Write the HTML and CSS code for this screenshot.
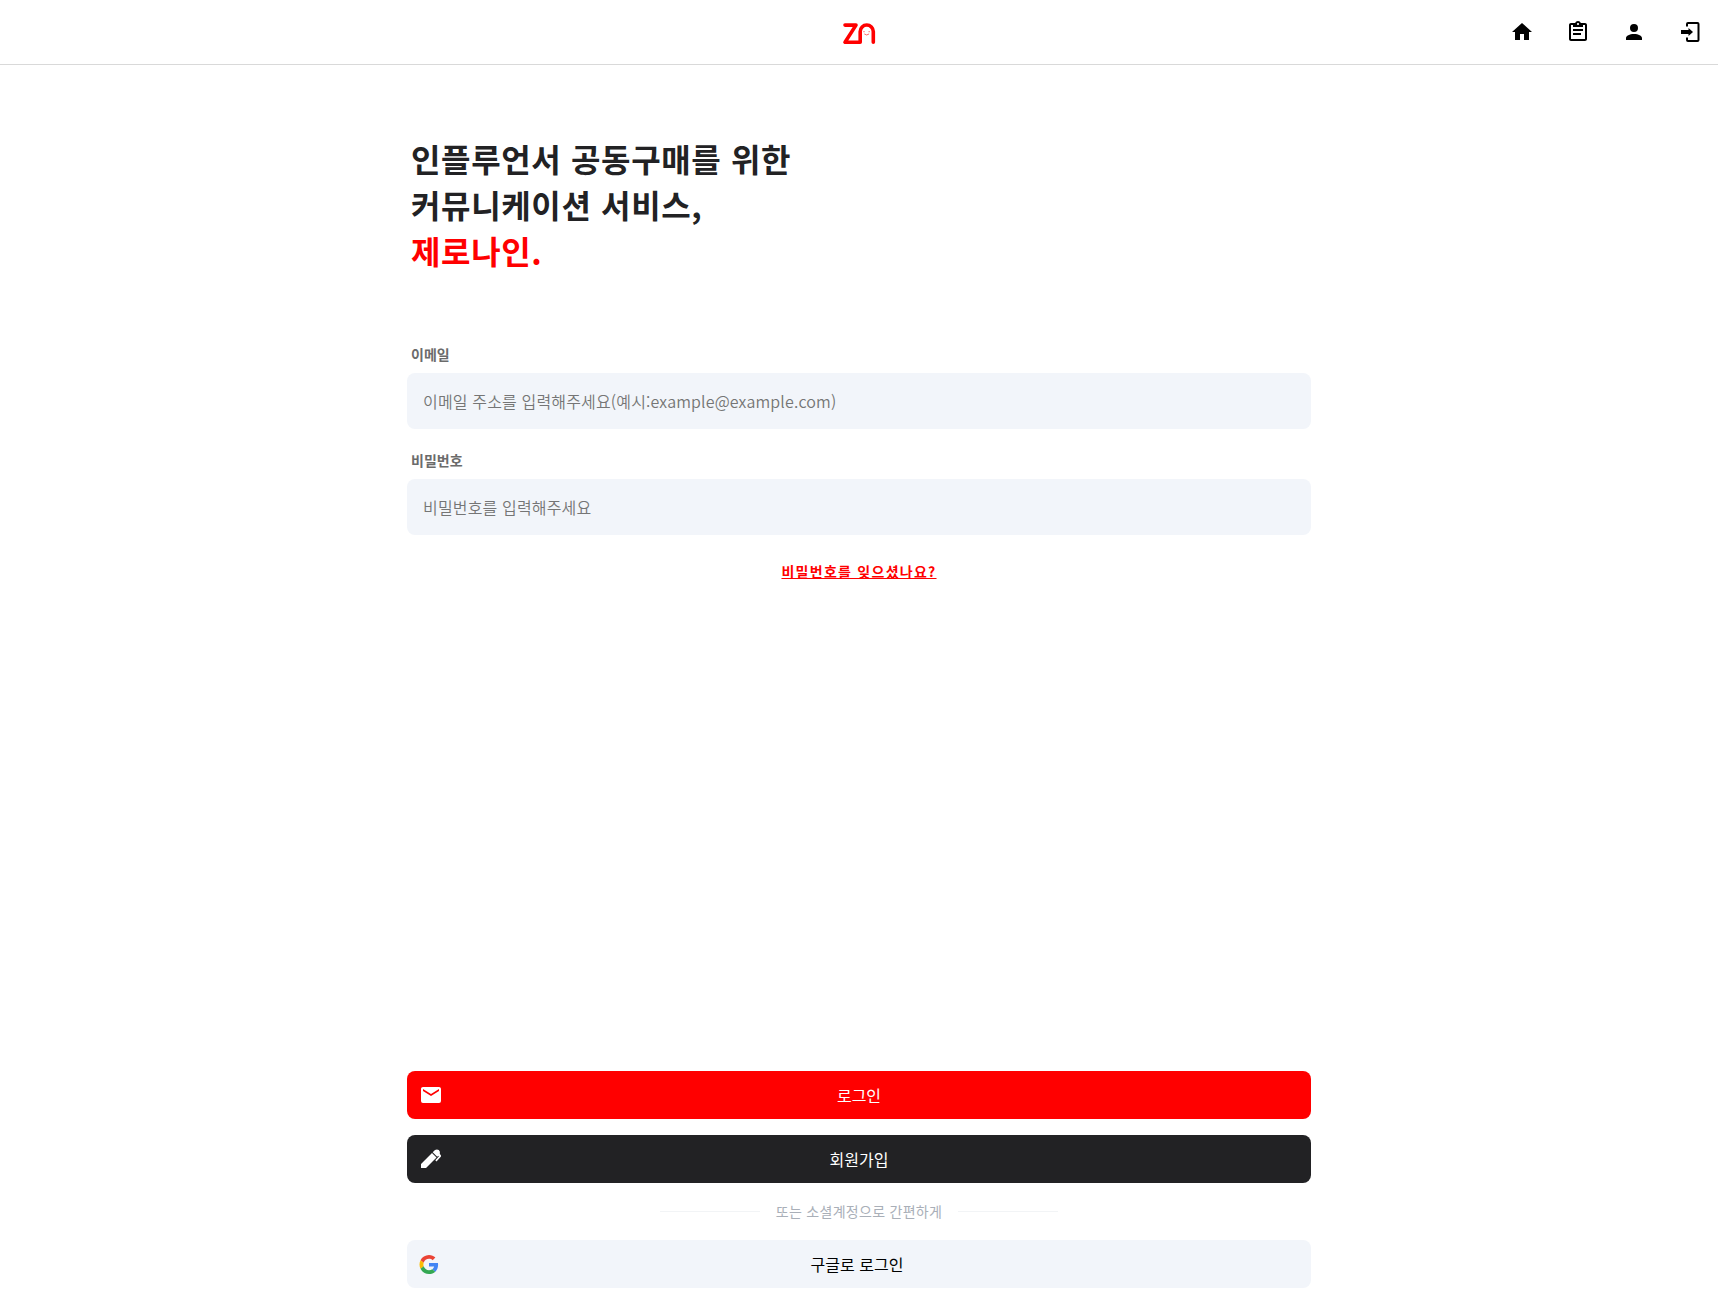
FILE: index.html
```html
<!DOCTYPE html>
<html lang="ko">
<head>
<meta charset="utf-8">
<meta name="viewport" content="width=device-width, initial-scale=1">
<title>제로나인</title>
<link rel="stylesheet" href="styles.css">
</head>
<body>
<header class="header">
  <a class="logo" href="#" aria-label="제로나인">
    <svg width="34" height="26" viewBox="0 0 34 26" fill="none" stroke="#f00" stroke-width="3.600" stroke-linecap="round" stroke-linejoin="round">
      <path d="M3 6.100H14L3 23.200H18.200V12.600A6.550 6.550 0 0 1 31.300 12.600V23.200"/>
      <g stroke-width="1" stroke-opacity=".6"><path d="M21.700 12.700H22.300M26.900 12.700H27.500M22.600 15.200Q24.700 17 26.800 15.200"/></g>
    </svg>
  </a>
  <nav class="nav">
    <a href="#" aria-label="홈"><svg class="icon" viewBox="0 0 24 24"><path d="M10 20V14H14V20H19V12H22L12 3L2 12H5V20H10Z"/></svg></a>
    <a href="#" aria-label="목록"><svg class="icon" viewBox="0 0 24 24"><path d="M19 3H14.820C14.400 1.840 13.300 1 12 1S9.600 1.840 9.180 3H5C3.900 3 3 3.900 3 5V19C3 20.100 3.900 21 5 21H19C20.100 21 21 20.100 21 19V5C21 3.900 20.100 3 19 3M12 3C12.550 3 13 3.450 13 4S12.550 5 12 5 11 4.550 11 4 11.450 3 12 3M7 7H17V5H19V19H5V5H7V7M17 11H7V9H17V11M15 15H7V13H15V15Z"/></svg></a>
    <a href="#" aria-label="내 정보"><svg class="icon" viewBox="0 0 24 24"><path d="M12 4A4 4 0 0 1 16 8A4 4 0 0 1 12 12A4 4 0 0 1 8 8A4 4 0 0 1 12 4M12 14C16.420 14 20 15.790 20 18V20H4V18C4 15.790 7.580 14 12 14Z"/></svg></a>
    <a href="#" aria-label="로그인 페이지"><svg class="icon" viewBox="0 0 24 24"><path d="M10 2H19.500A2 2 0 0 1 21.500 4V20A2 2 0 0 1 19.500 22H10A2 2 0 0 1 8 20V17.500H10V20H19.500V4H10V6.500H8V4A2 2 0 0 1 10 2M10.500 16V13.900H3V10.100H10.500V8L15 12Z"/></svg></a>
  </nav>
</header>
<main class="page">
  <h1 class="title">인플루언서 공동구매를 위한<br>커뮤니케이션 서비스,<br><span class="brand">제로나인.</span></h1>
  <form class="form">
    <div class="fields">
      <div class="field">
        <label for="email">이메일</label>
        <input id="email" type="email" placeholder="이메일 주소를 입력해주세요(예시:example@example.com)">
      </div>
      <div class="field">
        <label for="password">비밀번호</label>
        <input id="password" type="password" placeholder="비밀번호를 입력해주세요">
      </div>
      <a class="forgot" href="#">비밀번호를 잊으셨나요?</a>
    </div>
    <div class="actions">
      <button class="btn btn-login" type="submit">
        <svg class="icon" viewBox="0 0 24 24"><path d="M20 8L12 13L4 8V6L12 11L20 6M20 4H4C2.890 4 2 4.890 2 6V18A2 2 0 0 0 4 20H20A2 2 0 0 0 22 18V6C22 4.890 21.100 4 20 4Z"/></svg>
        <span>로그인</span>
      </button>
      <button class="btn btn-join" type="button">
        <svg class="icon" viewBox="0 0 24 24"><path d="M2 21V17L13 6L17.500 10.500L7 21ZM13.700 5.300L16 3Q18 2 19.800 3Q21.500 4.800 20.800 6.800L22 8.500V9.500L17.500 14.500L16.300 13.300L19.800 9.500L19.300 8.800L18.200 9.800Z"/></svg>
        <span>회원가입</span>
      </button>
      <p class="divider">또는 소셜계정으로 간편하게</p>
      <button class="btn btn-google" type="button">
        <svg class="google" viewBox="0 0 48 48"><path fill="#ea4335" d="M24 9.500c3.540 0 6.710 1.220 9.210 3.600l6.850-6.850C35.900 2.380 30.470 0 24 0 14.620 0 6.510 5.380 2.560 13.220l7.980 6.190C12.430 13.720 17.740 9.500 24 9.500z"/><path fill="#4285f4" d="M46.980 24.550c0-1.570-.15-3.090-.38-4.550H24v9.020h12.940c-.58 2.960-2.260 5.480-4.780 7.180l7.730 6c4.510-4.180 7.090-10.360 7.090-17.650z"/><path fill="#fbbc05" d="M10.530 28.590c-.48-1.450-.76-2.990-.76-4.590s.27-3.140.76-4.590l-7.980-6.190C.92 16.460 0 20.120 0 24c0 3.880.92 7.540 2.560 10.780l7.970-6.190z"/><path fill="#34a853" d="M24 48c6.480 0 11.930-2.130 15.890-5.810l-7.730-6c-2.150 1.450-4.920 2.300-8.160 2.300-6.260 0-11.570-4.220-13.470-9.910l-7.980 6.190C6.510 42.620 14.620 48 24 48z"/></svg>
        <span>구글로 로그인</span>
      </button>
    </div>
  </form>
</main>
</body>
</html>
```
FILE: styles.css
```css
* {
  box-sizing: border-box;
}

body {
  display: flex;
  flex-direction: column;
  min-height: 100vh;
  margin: 0;
  background: #fff;
  color: #222224;
  font-family: "Noto Sans CJK KR", sans-serif;
  font-size: 16px;
}

.icon {
  display: block;
  width: 24px;
  height: 24px;
  fill: currentColor;
}

.header {
  display: grid;
  grid-template-columns: 1fr auto 1fr;
  align-items: center;
  height: 65px;
  padding: 0 16px;
  border-bottom: 1px solid #d9d9d9;
}

.logo {
  grid-column: 2;
}

.logo svg {
  display: block;
}

.nav {
  display: flex;
  justify-content: flex-end;
  gap: 32px;
}

.nav a {
  color: #000;
}

.page {
  display: flex;
  flex: 1;
  flex-direction: column;
  width: 100%;
  max-width: 936px;
  margin: 0 auto;
  padding: 70px 16px 16px;
}

.title {
  margin: 0 0 70px;
  padding: 0 4px;
  font-size: 32px;
  font-weight: 700;
  line-height: 46px;
  letter-spacing: 0.02em;
}

.brand {
  color: #f00;
}

.form {
  display: flex;
  flex: 1;
  flex-direction: column;
  justify-content: space-between;
}

.fields {
  display: flex;
  flex-direction: column;
  gap: 20px;
}

.field {
  display: flex;
  flex-direction: column;
  gap: 8px;
}

.field label {
  padding: 0 4px;
  color: #6b6b6b;
  font-size: 14px;
  font-weight: 700;
  line-height: 22px;
}

.field input {
  height: 56px;
  padding: 0 16px;
  border: 0;
  border-radius: 8px;
  background: #f2f5fa;
  color: #222224;
  font: inherit;
  font-weight: 350;
  letter-spacing: 0.01em;
}

.field input::placeholder {
  color: #757575;
}

.forgot {
  align-self: center;
  margin-top: 4px;
  color: #f00;
  font-size: 14px;
  font-weight: 700;
  line-height: 24px;
  letter-spacing: 0.09em;
}

.actions {
  display: flex;
  flex-direction: column;
  gap: 16px;
}

.btn {
  display: grid;
  grid-template-columns: 24px 1fr 24px;
  align-items: center;
  height: 48px;
  padding: 0 12px;
  border: 0;
  border-radius: 8px;
  color: #fff;
  font: inherit;
  text-align: center;
}

.btn-login {
  background: #f00;
}

.btn-join {
  background: #222224;
}

.btn-google {
  grid-template-columns: 20px 1fr 24px;
  background: #f2f5fa;
  color: #000;
}

.google {
  width: 20px;
  height: 19px;
}

.divider {
  display: flex;
  align-items: center;
  justify-content: center;
  gap: 16px;
  margin: 0;
  color: #a9afb8;
  font-size: 14px;
  line-height: 25px;
  letter-spacing: 0.02em;
}

.divider::before,
.divider::after {
  width: 100px;
  height: 1px;
  background: #f2f4f6;
  content: "";
}
```
